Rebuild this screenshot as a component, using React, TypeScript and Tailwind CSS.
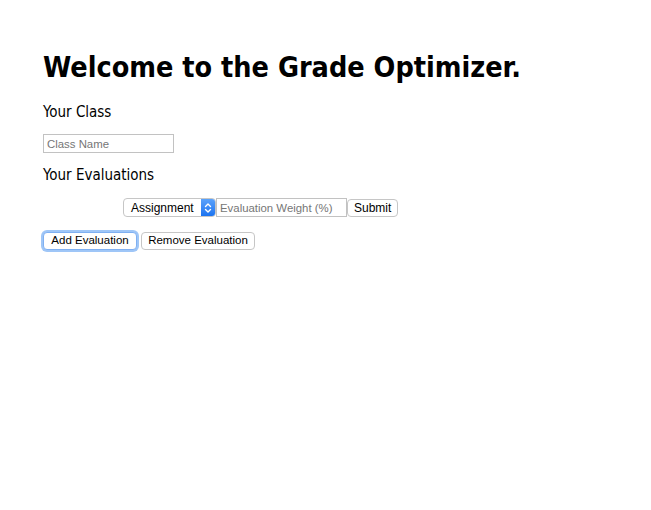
export default function App() {
  return (
    <main className="min-h-screen bg-white text-black font-['DejaVu_Sans_Condensed','DejaVu_Sans',sans-serif] [font-stretch:condensed] px-[43px] pt-[50px]">
      <h1 className="text-[28.5px] font-bold leading-[36px]">Welcome to the Grade Optimizer.</h1>

      <h3 className="text-[15px] leading-[20px] mt-[16px]">Your Class</h3>
      <input
        type="text"
        placeholder="Class Name"
        className="mt-[12px] block w-[131px] h-[19px] border border-[#c2c2c2] px-[3px] text-[11.4px] font-['Liberation_Sans',sans-serif] [font-stretch:normal] placeholder:text-[#767676] outline-none"
      />

      <h3 className="text-[15px] leading-[20px] mt-[12px]">Your Evaluations</h3>

      {/* evaluation row */}
      <div className="flex items-center mt-[13px] ml-[80px] font-['Liberation_Sans',sans-serif] [font-stretch:normal] text-[12px]">
        <div className="flex items-center h-[19px] w-[93px] border border-[#c6c6c6] rounded-[4px] bg-white overflow-hidden">
          <span className="flex-1 pl-[7px]">Assignment</span>
          <span className="flex items-center justify-center w-[14px] h-full bg-gradient-to-b from-[#5aa2fb] to-[#1a73f0]">
            <svg width="8" height="12" viewBox="0 0 8 12" fill="none" stroke="white" strokeWidth="1.4" strokeLinecap="round" strokeLinejoin="round">
              <path d="M1.5 4.5 L4 2 L6.5 4.5" />
              <path d="M1.5 7.5 L4 10 L6.5 7.5" />
            </svg>
          </span>
        </div>
        <input
          type="text"
          placeholder="Evaluation Weight (%)"
          className="w-[131px] h-[19px] border border-[#c2c2c2] px-[3px] text-[11.4px] placeholder:text-[#767676] outline-none"
        />
        <button className="h-[18px] px-[6px] border border-[#c6c6c6] rounded-[4px] bg-white text-[12px] leading-none">
          Submit
        </button>
      </div>

      <div className="flex gap-[4px] mt-[15px] font-['Liberation_Sans',sans-serif] [font-stretch:normal] text-[11.5px]">
        <button className="h-[18px] w-[94px] border border-[#7fb0f2] rounded-[4px] bg-white leading-none shadow-[0_0_0_2px_#9fc6f7]">
          Add Evaluation
        </button>
        <button className="h-[18px] w-[114px] border border-[#c6c6c6] rounded-[4px] bg-white leading-none">
          Remove Evaluation
        </button>
      </div>
    </main>
  );
}
